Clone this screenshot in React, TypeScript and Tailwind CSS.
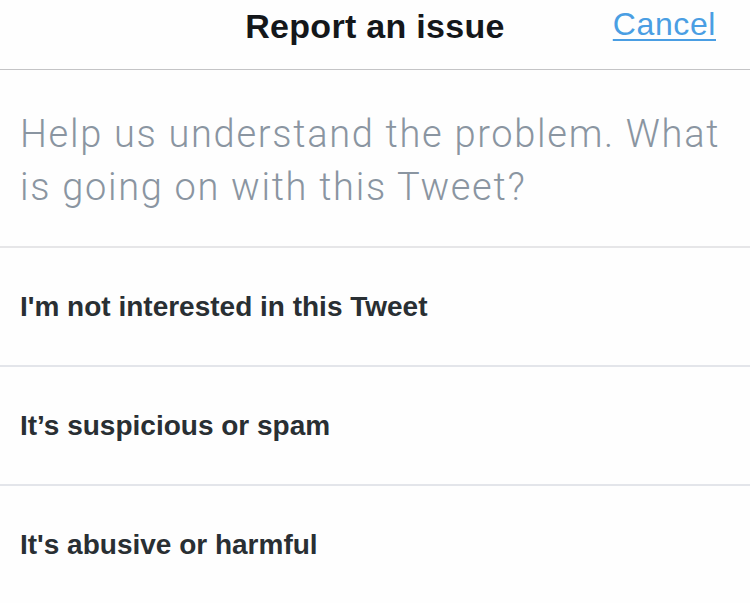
import React from 'react';

const options = [
  "I'm not interested in this Tweet",
  'It’s suspicious or spam',
  "It's abusive or harmful",
];

const App: React.FC = () => {
  return (
    <div className="w-[750px] h-[603px] overflow-hidden bg-[#fefefe] font-['Liberation_Sans',Arial,sans-serif]">
      {/* Header */}
      <div className="h-[70px] border-b border-[#c4c4c6] grid grid-cols-[1fr_auto_1fr] items-start">
        <div />
        <h1 className="pt-[6px] text-[34px] leading-[40px] font-bold text-[#14171a] tracking-[0.3px]">
          Report an issue
        </h1>
        <div className="flex justify-end pr-[34px] pt-[4px]">
          <a className="text-[32px] leading-[40px] text-[#4a9ee3] underline decoration-2 underline-offset-[4px] tracking-[0.6px]">
            Cancel
          </a>
        </div>
      </div>

      {/* Prompt */}
      <div className="px-[20px] pt-[38px] pb-[32px] border-b-2 border-[#e6e6e8]">
        <p className="font-['Roboto','Liberation_Sans',sans-serif] font-light text-[38px] leading-[53px] text-[#8a95a1] tracking-[1.7px] whitespace-nowrap">
          Help us understand the problem. What
          <br />
          is going on with this Tweet?
        </p>
      </div>

      {/* Options */}
      <div className="flex flex-col">
        {options.map((label) => (
          <button
            key={label}
            className="h-[119px] flex items-center px-[20px] border-b-2 border-[#e3e5ea] text-left"
          >
            <span className="text-[28px] font-bold text-[#292f33]">{label}</span>
          </button>
        ))}
      </div>
    </div>
  );
};

export default App;
